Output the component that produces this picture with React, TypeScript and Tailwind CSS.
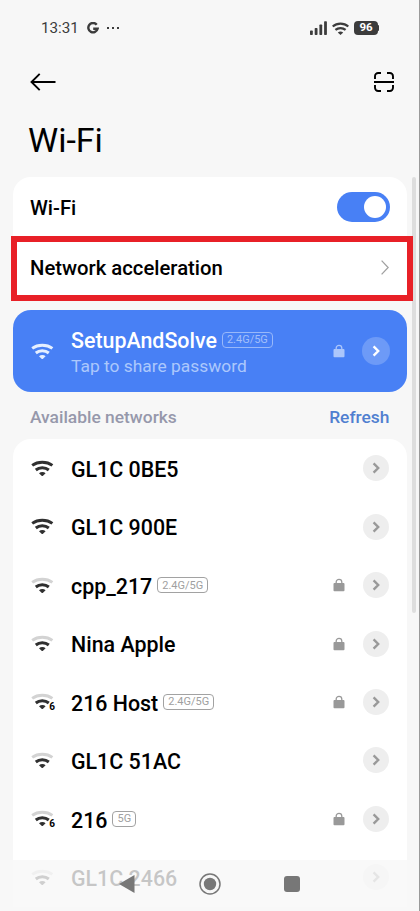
import React from "react";

type Network = { name: string; band?: string; locked?: boolean; weak?: boolean; six?: boolean };

const networks: Network[] = [
  { name: "GL1C 0BE5" },
  { name: "GL1C 900E" },
  { name: "cpp_217", band: "2.4G/5G", locked: true, weak: true },
  { name: "Nina Apple", locked: true, weak: true },
  { name: "216 Host", band: "2.4G/5G", locked: true, weak: true, six: true },
  { name: "GL1C 51AC", weak: true },
  { name: "216", band: "5G", locked: true, weak: true, six: true },
  { name: "GL1C 2466", weak: true },
];

function WifiIcon({ weak = false, six = false, className = "" }: { weak?: boolean; six?: boolean; className?: string }) {
  return (
    <span className={`relative block h-[17px] w-[22px] shrink-0 ${className}`}>
      <svg viewBox="0 0 22 17" className="block h-full w-full overflow-visible" fill="none" stroke="currentColor" strokeWidth="3">
        <path d="M1.2 5.4C6.9 1.2 15.7 1.2 21.4 5.4" stroke={weak ? "#d3d3d3" : "currentColor"} />
        <path d="M4.8 10C8.4 7.1 14.2 7.1 17.8 10" />
        <path d="M8 13.2C9.8 11.7 12.8 11.7 14.6 13.2L12 15.8Q11.3 16.4 10.6 15.8Z" fill="currentColor" stroke="none" />
      </svg>
      {six && <span className="absolute -right-[2px] -bottom-[2px] text-[10px] leading-[10px] font-bold text-black">6</span>}
    </span>
  );
}

function Lock({ className = "" }: { className?: string }) {
  return (
    <svg viewBox="0 0 12 14" className={`h-[14px] w-3 shrink-0 ${className}`}>
      <rect x=".5" y="5" width="11" height="8.2" rx=".9" fill="currentColor" />
      <path d="M3.2 6V4.1a2.8 2.8 0 0 1 5.6 0V6" fill="none" stroke="currentColor" strokeWidth="1.3" />
    </svg>
  );
}

function Chevron() {
  return (
    <svg viewBox="0 0 8 12" className="h-3 w-2" fill="none" stroke="currentColor" strokeWidth="2.4">
      <path d="M1.6 1.4 6.2 6 1.6 10.6" />
    </svg>
  );
}

function Band({ children, className = "" }: { children: React.ReactNode; className?: string }) {
  return (
    <span className={`flex h-4 items-center rounded-[4px] border px-1 text-[11px] leading-none ${className}`}>
      {children}
    </span>
  );
}

export default function App() {
  return (
    <div className="relative h-[911px] w-[420px] overflow-hidden border-r border-[#9a9a9a] bg-[#f7f7f7] font-['Roboto',sans-serif] text-black">
      <header className="flex h-14 items-center pr-[40px] pl-[41px] text-[#3c3c3c]">
        <span className="w-[38px] pt-[1px] text-[15.2px] whitespace-nowrap">13:31</span>
        <svg viewBox="0 0 12 12" className="ml-[8px] h-3 w-3" fill="none" stroke="currentColor" strokeWidth="2.4">
          <path d="M9.7 2.7A4.7 4.7 0 1 0 10.6 6.8H6.2" />
        </svg>
        <svg viewBox="0 0 12 2" className="ml-[8px] h-[2px] w-3" fill="currentColor">
          <rect width="2" height="2" /><rect x="5" width="2" height="2" /><rect x="10" width="2" height="2" />
        </svg>
        <svg viewBox="0 0 17 14" className="ml-auto h-[14px] w-[17px]" fill="currentColor">
          <rect y="9.5" width="2.8" height="4.5" rx=".7" /><rect x="4.7" y="7" width="2.8" height="7" rx=".7" />
          <rect x="9.4" y="3.5" width="2.8" height="10.5" rx=".7" /><rect x="14.1" y=".3" width="2.8" height="13.7" rx=".7" />
        </svg>
        <svg viewBox="0 0 17 13" className="ml-[5px] h-[13px] w-[17px]" fill="none" stroke="currentColor" strokeWidth="2.2">
          <path d="M.7 4.5C5.1.6 11.9.6 16.3 4.5" /><path d="M3.4 7.9C6.3 5.4 10.7 5.4 13.6 7.9" />
          <path d="M5.8 10.5C7.4 9 9.6 9 11.2 10.5L8.5 13Z" fill="currentColor" stroke="none" />
        </svg>
        <span className="ml-[5px] flex h-[14px] w-[24px] items-center justify-center rounded-[4px] bg-[#3c3c3c] text-[11.5px] leading-none font-bold text-white">96</span>
        <span className="h-[6px] w-[1px] rounded-r bg-[#3c3c3c]" />
      </header>

      <div className="flex h-[52px] items-center justify-between pr-[25.5px] pl-[30px]">
        <svg viewBox="0 0 26 18" className="h-[18px] w-[26px]" fill="none" stroke="black" strokeWidth="1.9">
          <path d="M25.5 9H1.5M9.7 .9 1.5 9 9.7 17.1" />
        </svg>
        <svg viewBox="0 0 20 20" className="h-5 w-5" fill="none" stroke="black" strokeWidth="1.9">
          <path d="M0 10H20M1 7V4.2A3.2 3.2 0 0 1 4.2 1H7M13 1h2.8A3.2 3.2 0 0 1 19 4.2V7M19 13v2.8a3.2 3.2 0 0 1-3.2 3.2H13M7 19H4.2A3.2 3.2 0 0 1 1 15.8V13" />
        </svg>
      </div>
      <h1 className="flex h-[69px] items-center pb-[5px] pl-[28px] text-[34px] leading-none">Wi-Fi</h1>

      <section className="mr-3 ml-[13px] h-[124px] rounded-[18px] bg-white">
        <div className="flex h-[59px] items-center justify-between pr-[17px] pl-[17px]">
          <span className="pt-[3px] text-[20.3px] leading-none font-medium">Wi-Fi</span>
          <span className="flex h-[30px] w-[53px] items-center justify-end rounded-full bg-[#4880f5] pr-[4px]">
            <span className="h-[22px] w-[22px] rounded-full bg-white" />
          </span>
        </div>
        <div className="relative z-10 -mr-[6px] -ml-[2px] flex h-[65px] items-center justify-between border-[6px] border-[#e82027] bg-white pr-[18px] pl-[13px]">
          <span className="text-[20.3px] leading-none font-medium">Network acceleration</span>
          <svg viewBox="0 0 8 15" className="mb-[2px] h-[15px] w-2" fill="none" stroke="#a0a0a0" strokeWidth="1.3">
            <path d="M.6.6 7.2 7.5.6 14.4" />
          </svg>
        </div>
      </section>

      <section className="mt-[9px] mr-3 ml-[13px] flex h-[82px] items-center rounded-[18px] bg-[#4880f5] pr-[17.5px] pl-[18px] text-white">
        <WifiIcon className="text-[#e5efff]" />
        <div className="ml-[18px] flex-1 pt-[4px]">
          <div className="flex items-center gap-[5px]">
            <span className="text-[21.4px] leading-6 font-medium">SetupAndSolve</span>
            <Band className="mb-[2px] border-[#98b8fa] text-[#a3bffa]">2.4G/5G</Band>
          </div>
          <div className="mt-[1px] text-[17.4px] leading-6 text-[#acc8fc]">Tap to share password</div>
        </div>
        <Lock className="mr-[16.5px] text-[#acc6fb]" />
        <span className="flex h-7 w-7 items-center justify-center rounded-full bg-[#6d9af7]"><Chevron /></span>
      </section>

      <div className="flex h-[47px] items-center justify-between pt-[4px] pr-[29.5px] pl-[30px] text-[17.4px] font-medium">
        <span className="text-[#9698ab]">Available networks</span>
        <span className="text-[#507fd0]">Refresh</span>
      </div>

      <section className="mr-3 ml-[13px] rounded-t-[18px] bg-white">
        {networks.map((n) => (
          <div key={n.name} className="flex h-[58.45px] items-center pr-[18.5px] pl-[18px]">
            <WifiIcon weak={n.weak} six={n.six} className="text-[#303030]" />
            <span className="ml-[18px] pt-[3.5px] text-[21.4px] leading-6 font-medium">{n.name}</span>
            {n.band && <Band className="ml-[5px] border-[#a2a2a2] text-[#a0a0a0]">{n.band}</Band>}
            <span className="flex-1" />
            {n.locked && <Lock className="mr-[17.5px] text-[#999]" />}
            <span className="flex h-[26px] w-[26px] items-center justify-center rounded-full bg-[#eee] text-[#999]"><Chevron /></span>
          </div>
        ))}
      </section>

      <div className="absolute top-[177px] right-[3.5px] h-[436px] w-1 rounded-full bg-[#dedede]" />
      <nav className="absolute inset-x-0 bottom-0 flex h-[51px] items-center bg-[#f7f7f7]/80 pb-[3px] pl-[119px]">
        <svg viewBox="0 0 16 18" className="h-[18px] w-4"><path d="M0 9 15.5 0V18Z" fill="#777" /></svg>
        <svg viewBox="0 0 22 22" className="ml-[64px] h-[22px] w-[22px]">
          <circle cx="11" cy="11" r="10" fill="#f7f7f7" stroke="#777" strokeWidth="1.5" /><circle cx="11" cy="11" r="6.2" fill="#777" />
        </svg>
        <span className="ml-[63px] h-4 w-4 rounded-[3px] bg-[#777]" />
      </nav>
    </div>
  );
}
